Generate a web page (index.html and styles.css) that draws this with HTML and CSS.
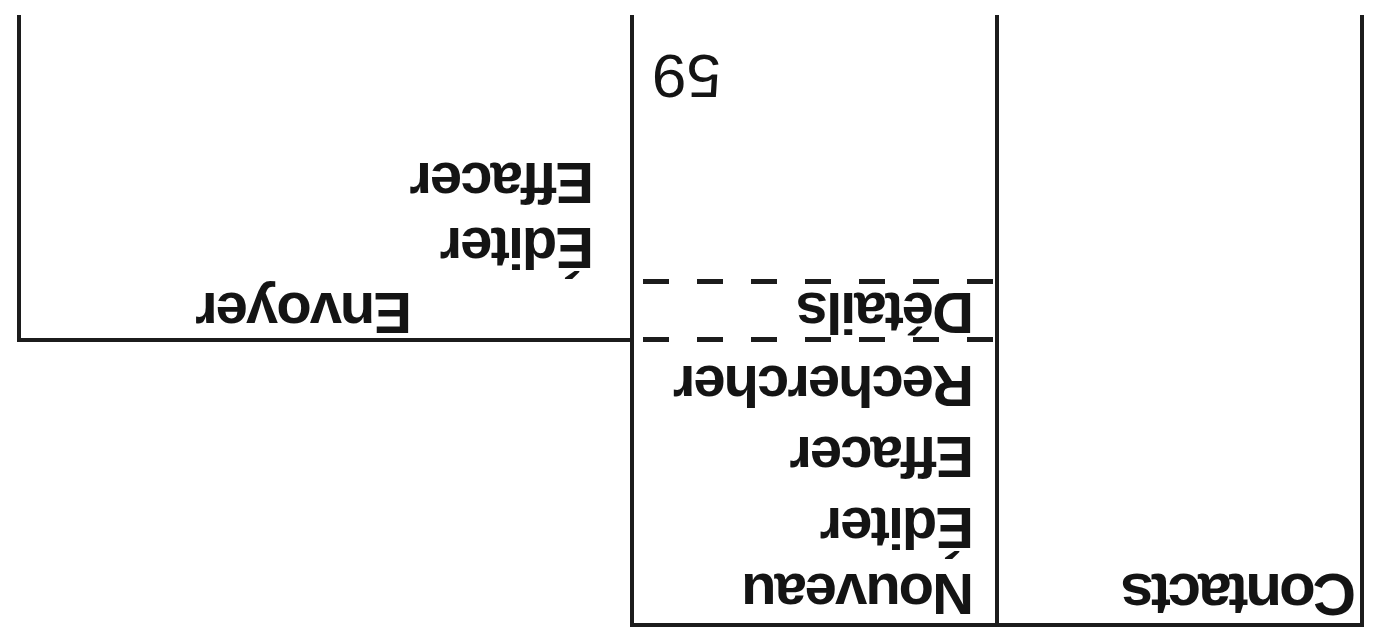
FILE: index.html
```html
<!DOCTYPE html>
<html lang="fr">
<head>
<meta charset="utf-8">
<title>Contacts</title>
<link rel="stylesheet" href="styles.css">
</head>
<body>
<div class="sheet">
  <div class="panel panel-contacts">
    <div class="title">Contacts</div>
  </div>
  <div class="panel panel-menu">
    <ul class="menu">
      <li class="item item-first">Nouveau</li>
      <li class="item">Éditer</li>
      <li class="item">Effacer</li>
      <li class="item">Rechercher</li>
    </ul>
    <div class="details">
      <span class="item">Détails</span>
    </div>
    <div class="ref">59</div>
  </div>
  <div class="panel panel-sub">
    <ul class="submenu">
      <li class="item item-send">Envoyer</li>
      <li class="item">Éditer</li>
      <li class="item item-last">Effacer</li>
    </ul>
  </div>
</div>
</body>
</html>
```

FILE: styles.css
```css
html, body {
  margin: 0;
  padding: 0;
  background: #ffffff;
  overflow: hidden;
}

.sheet {
  width: 1373px;
  height: 628px;
  box-sizing: border-box;
  padding: 1px 0 15px 9px;
  display: flex;
  align-items: stretch;
  transform: rotate(180deg);
  font-family: "Liberation Sans", Arial, Helvetica, sans-serif;
  color: #141414;
}

.panel {
  box-sizing: border-box;
  border-color: #1c1c1c;
  border-style: solid;
  border-width: 0;
}

.panel-contacts {
  width: 369px;
  border-width: 4px 4px 0 4px;
  padding: 5px 0 0 4px;
}

.title {
  font-weight: 700;
  font-size: 60px;
  letter-spacing: -3px;
  line-height: 48px;
}

.panel-menu {
  width: 365px;
  border-width: 4px 4px 0 0;
  display: flex;
  flex-direction: column;
}

.menu, .submenu {
  list-style: none;
  margin: 0;
  padding: 0;
  display: flex;
  flex-direction: column;
}

.menu {
  gap: 23px;
}

.item {
  display: block;
  font-weight: 700;
  font-size: 58px;
  letter-spacing: -2px;
  line-height: 48px;
  white-space: nowrap;
}

.menu .item {
  padding-left: 21px;
}

.menu .item-first {
  margin: 5px 0 -5px;
}

.details {
  margin: 20px 0 0 2px;
  padding: 5px 0 10px 19px;
  background:
    repeating-linear-gradient(90deg, #1c1c1c 0 26px, transparent 26px 54px) top left / 100% 5px no-repeat,
    repeating-linear-gradient(90deg, #1c1c1c 0 26px, transparent 26px 54px) bottom left / 100% 5px no-repeat;
}

.ref {
  margin-top: auto;
  margin-bottom: 30px;
  align-self: flex-end;
  margin-right: 18px;
  font-weight: 400;
  font-size: 62px;
  line-height: 62px;
}

.panel-sub {
  width: 613px;
  margin-top: 285px;
  border-width: 4px 4px 0 0;
}

.submenu {
  padding: 1px 0 0 36px;
}

.item-send {
  margin-left: 182px;
}

.submenu .item + .item {
  margin-top: 17px;
}

.submenu .item-last {
  margin-top: 24px;
}
```
